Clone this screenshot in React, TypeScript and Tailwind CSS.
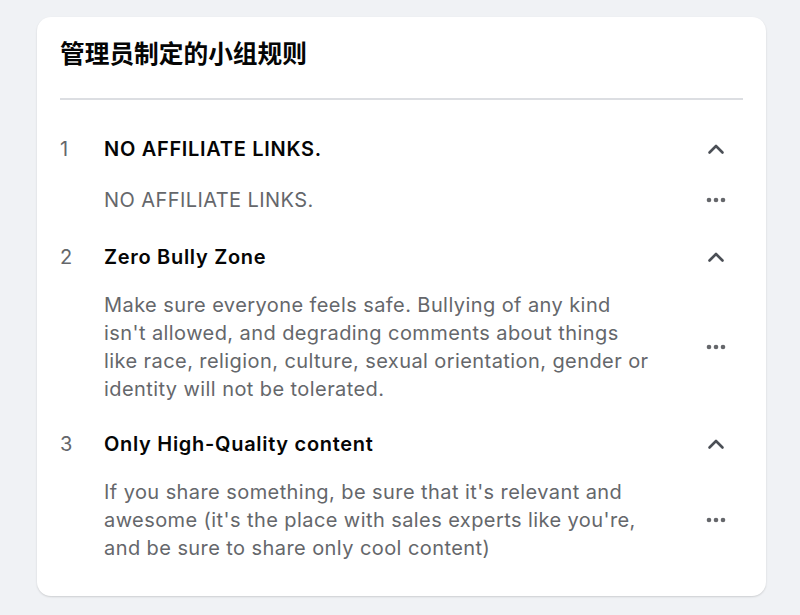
import React from 'react';

type Rule = {
  title: string;
  body: string;
  bodyGap: string;
};

const rules: Rule[] = [
  { title: 'NO AFFILIATE LINKS.', body: 'NO AFFILIATE LINKS.', bodyGap: 'mt-[23px]' },
  {
    title: 'Zero Bully Zone',
    body: "Make sure everyone feels safe. Bullying of any kind isn't allowed, and degrading comments about things like race, religion, culture, sexual orientation, gender or identity will not be tolerated.",
    bodyGap: 'mt-[20px]'
  },
  {
    title: 'Only High-Quality content',
    body: "If you share something, be sure that it's relevant and awesome (it's the place with sales experts like you're, and be sure to share only cool content)",
    bodyGap: 'mt-[20px]'
  }
];

const ChevronUp = () => (
  <svg width="18" height="12" viewBox="0 0 18 12" fill="none">
    <path d="M2.5 9.5 L9 3 L15.5 9.5" stroke="#4b4f56" strokeWidth="2.6" strokeLinecap="round" strokeLinejoin="round" />
  </svg>
);

const Dots = () => (
  <svg width="20" height="6" viewBox="0 0 20 6" fill="#65676b">
    <circle cx="3" cy="3" r="2.3" />
    <circle cx="10" cy="3" r="2.3" />
    <circle cx="17" cy="3" r="2.3" />
  </svg>
);

export default function App() {
  return (
    <div className="min-h-[615px] bg-[#f0f2f5] pt-[17px] pb-[19px] pl-[37px] font-['Inter','Noto_Sans_CJK_SC',sans-serif]">
      <div className="w-[729px] rounded-[14px] bg-white px-[23px] pt-[20px] pb-[34px] shadow-[0_1px_2px_rgba(0,0,0,0.15)]">
        {/* Header */}
        <h2 className="text-[24.7px] leading-[30px] font-bold text-[#050505] font-['Noto_Sans_CJK_SC',sans-serif]">
          管理员制定的小组规则
        </h2>
        <div className="mt-[31px] h-[2px] bg-[#dcdee2]" />

        {/* Rules */}
        <div className="mt-[35px] flex flex-col">
          {rules.map((rule, i) => (
            <div key={i} className={i === 0 ? '' : i === 1 ? 'mt-[29px]' : 'mt-[27px]'}>
              <div className="flex items-center">
                <div className="w-[44px] text-[20px] leading-[28px] text-[#65676b]">{i + 1}</div>
                <div className="flex-1 text-[20px] leading-[28px] font-semibold tracking-[0.7px] text-[#050505]">
                  {rule.title}
                </div>
                <div className="flex w-[50px] justify-center pr-[4px]">
                  <ChevronUp />
                </div>
              </div>
              <div className={`${rule.bodyGap} flex items-center`}>
                <div className="w-[44px]" />
                <p className="w-[551px] text-[20px] leading-[28px] tracking-[0.42px] text-[#65676b]">{rule.body}</p>
                <div className="flex flex-1 justify-end pr-[17px]">
                  <Dots />
                </div>
              </div>
            </div>
          ))}
        </div>
      </div>
    </div>
  );
}
